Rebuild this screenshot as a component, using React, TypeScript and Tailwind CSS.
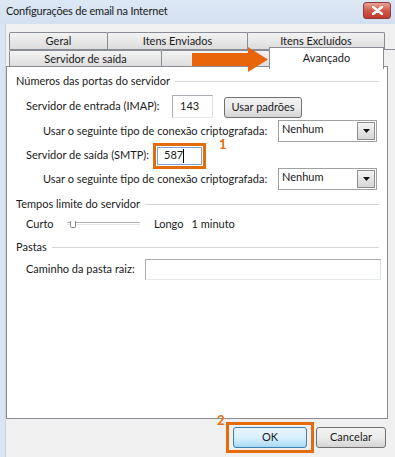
import React from 'react';

const font = { fontFamily: 'Lato, "Open Sans", Arial, sans-serif' };

const Tab = ({ label, w }: { label: string; w: string }) => (
  <div
    className={`${w} h-full flex items-center justify-center border border-[#898c95] border-b-0 -ml-px first:ml-0 bg-gradient-to-b from-[#f3f3f3] to-[#dcdcdc] text-[#1a1a1a] rounded-t-[2px] whitespace-nowrap`}
  >
    {label}
  </div>
);

const SectionHeader = ({ label, className }: { label: string; className: string }) => (
  <div className={`flex items-center h-[16px] pl-[9px] pr-[8px] ${className}`}>
    <span className="whitespace-nowrap">{label}</span>
    <div className="flex-1 h-px bg-[#d5d5d5] ml-[5px]" />
  </div>
);

const TextBox = ({ value, className }: { value?: string; className: string }) => (
  <div className={`shrink-0 border border-[#abadb3] border-b-[#e3e9ef] border-r-[#dbdfe6] bg-white flex items-center pl-[7px] ${className}`}>
    {value}
  </div>
);

const EncryptionRow = ({ className }: { className: string }) => (
  <div className={`grid grid-cols-[36px_235px_99px] items-center h-[22px] w-[380px] ${className}`}>
    <span />
    <span>Usar o seguinte tipo de conexão criptografada:</span>
    <div className="w-[99px] h-[22px] border border-[#a0a0a0] bg-white flex items-center justify-between pl-[3px] pr-px">
      <span className="-mt-[3px]">Nenhum</span>
      <div className="w-[18px] h-[18px] border border-[#8f8f8f] bg-gradient-to-b from-[#f4f4f4] to-[#d6d6d6] flex items-center justify-center">
        <svg width="7" height="4" viewBox="0 0 7 4">
          <path d="M0 0h7L3.5 4z" fill="#111" />
        </svg>
      </div>
    </div>
  </div>
);

const Button = ({ label, className }: { label: string; className: string }) => (
  <div className={`shrink-0 h-[21px] border border-[#707070] rounded-[3px] flex items-center justify-center bg-gradient-to-b from-[#f2f2f2] via-[#ebebeb] to-[#d4d4d4] whitespace-nowrap ${className}`}>
    {label}
  </div>
);

export default function App() {
  return (
    <div className="relative w-[395px] h-[457px] overflow-hidden bg-[#f0f0f0] text-[11px] text-[#1a1a1a]" style={font}>
      {/* title bar */}
      <div className="h-[24px] flex items-center justify-between bg-gradient-to-b from-[#dde8f5] to-[#d3e0f0] pl-[6px] pr-[4px]">
        <span className="text-[11px] tracking-[-0.2px] text-[#1c1c1c] -mt-px whitespace-nowrap">Configurações de email na Internet</span>
        <div className="w-[28px] h-[17px] -mt-[4px] rounded-[3px] border border-[#8c3b36] bg-gradient-to-b from-[#e8a296] via-[#cf5a4c] to-[#c0392b] flex items-center justify-center">
          <svg width="11" height="9" viewBox="0 0 11 9">
            <path d="M1 1l9 7M10 1L1 8" stroke="#fff" strokeWidth="2.4" strokeLinecap="round" />
          </svg>
        </div>
      </div>

      <div className="flex">
        {/* window frame strip */}
        <div className="w-[6px] h-[433px] bg-[#dae5f3] border-r border-[#c6d4e6]" />

        <div className="flex-1 flex flex-col">
          {/* tabs */}
          <div className="pt-[8px] pl-[3px] flex flex-col">
            <div className="flex h-[17px]">
              <Tab label="Geral" w="w-[99px]" />
              <Tab label="Itens Enviados" w="w-[141px]" />
              <Tab label="Itens Excluídos" w="w-[138px]" />
            </div>
            <div className="flex h-[18px] border-t border-[#898c95]">
              <Tab label="Servidor de saída" w="w-[153px]" />
              <Tab label="" w="w-[109px]" />
              <div className="relative w-[115px] -ml-px -mt-[3px] h-[22px] z-10 bg-white border border-[#898c95] border-b-0 flex justify-center pt-[2px]">
                Avançado
              </div>
            </div>
          </div>

          {/* panel */}
          <div className="w-[382px] h-[353px] -mt-px bg-white border border-[#898c95] whitespace-nowrap flex flex-col items-start">
            <SectionHeader label="Números das portas do servidor" className="mt-[6px] w-[380px]" />

            <div className="flex items-center h-[24px] mt-[5px] pl-[19px]">
              <span className="w-[146px] shrink-0">Servidor de entrada (IMAP):</span>
              <TextBox value="143" className="w-[41px] h-[23px]" />
              <Button label="Usar padrões" className="w-[78px] ml-[11px] mt-[2px]" />
            </div>

            <EncryptionRow className="mt-[2px]" />

            <div className="flex items-center h-[25px] mt-px pl-[19px]">
              <span className="w-[127px] shrink-0">Servidor de saída (SMTP):</span>
              <div className="shrink-0 w-[53px] h-[26px] border-[3px] border-[#e46c0a] p-[1px]">
                <div className="w-full h-full border border-[#7da2ce] bg-white flex items-center pl-[6px]">
                  587<span className="w-px h-[14px] bg-black" />
                </div>
              </div>
            </div>

            <EncryptionRow className="mt-0" />

            <SectionHeader label="Tempos limite do servidor" className="mt-[6px] w-[380px]" />

            <div className="flex items-center h-[16px] mt-[4px] pl-[19px]">
              <span className="w-[41px] shrink-0">Curto</span>
              <div className="relative w-[73px] h-[4px] shrink-0">
                <div className="absolute left-0 right-0 top-0 h-[3px] border-t border-[#b0b0b0] border-b border-b-[#e6e6e6]" />
                <div className="absolute left-[3px] -top-[1px] w-[6px] h-[7px] border-l border-r border-b border-[#8a8a8a] rounded-b-[2px] bg-white" />
              </div>
              <span className="ml-[14px]">Longo</span>
              <span className="ml-[8px]">1 minuto</span>
            </div>

            <SectionHeader label="Pastas" className="mt-[7px] w-[380px]" />

            <div className="flex items-center h-[21px] mt-[4px] pl-[19px]">
              <span className="w-[119px] shrink-0">Caminho da pasta raiz:</span>
              <TextBox className="w-[236px] h-[21px]" />
            </div>
          </div>

          {/* bottom buttons */}
          <div className="flex justify-end items-start pr-[9px] mt-[3px]">
            <div className="w-[88px] h-[31px] border-[3px] border-[#e46c0a] flex items-center justify-center">
              <div className="w-[74px] h-[21px] rounded-[3px] border border-[#3c7fb1] bg-gradient-to-b from-[#eaf6fd] via-[#d9f0fc] to-[#a7d9f5] flex items-center justify-center">
                OK
              </div>
            </div>
            <Button label="Cancelar" className="w-[70px] ml-[2px] mt-[5px]" />
          </div>
        </div>
      </div>

      {/* annotations */}
      <svg className="absolute left-[192px] top-[47px] z-20" width="77" height="25" viewBox="0 0 77 25">
        <path d="M0 6h56V0l20 12.5L56 25v-6H0z" fill="#e8650c" />
      </svg>
      <span className="absolute left-[219px] top-[135px] text-[13px] font-bold text-[#e46c0a]">1</span>
      <span className="absolute left-[217px] top-[411px] text-[13px] font-bold text-[#e46c0a]">2</span>
    </div>
  );
}
